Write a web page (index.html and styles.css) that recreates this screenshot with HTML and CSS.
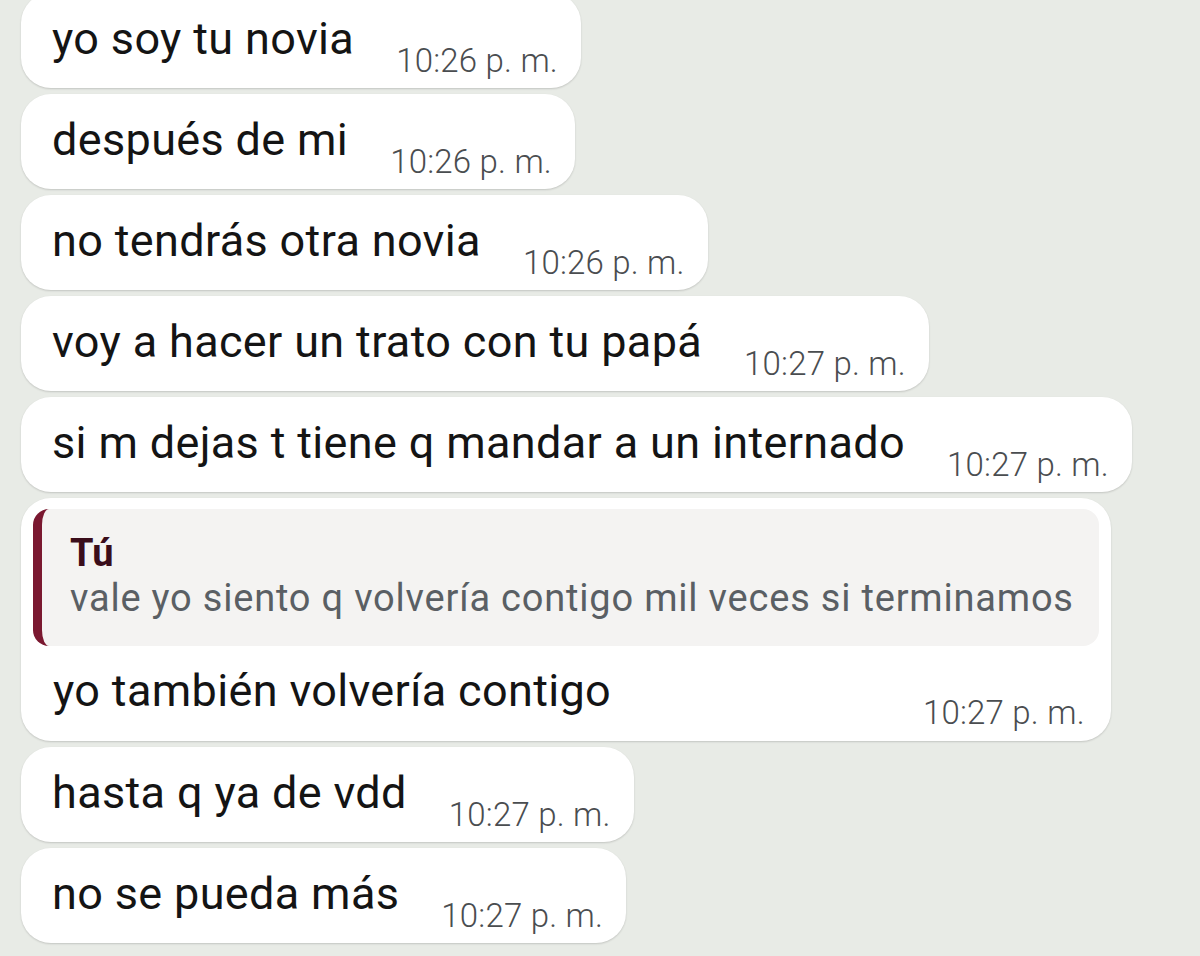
FILE: index.html
```html
<!DOCTYPE html>
<html lang="es">
<head>
<meta charset="utf-8">
<title>Chat</title>
<link rel="stylesheet" href="styles.css">
</head>
<body>
<main class="chat">
  <div class="bubble">
    <div class="row"><span class="text">yo soy tu novia</span><span class="time">10:26 p. m.</span></div>
  </div>
  <div class="bubble">
    <div class="row"><span class="text">después de mi</span><span class="time">10:26 p. m.</span></div>
  </div>
  <div class="bubble">
    <div class="row"><span class="text">no tendrás otra novia</span><span class="time">10:26 p. m.</span></div>
  </div>
  <div class="bubble">
    <div class="row"><span class="text">voy a hacer un trato con tu papá</span><span class="time">10:27 p. m.</span></div>
  </div>
  <div class="bubble">
    <div class="row"><span class="text">si m dejas t tiene q mandar a un internado</span><span class="time">10:27 p. m.</span></div>
  </div>
  <div class="bubble bubble-reply">
    <div class="quote">
      <div class="quote-author">Tú</div>
      <div class="quote-text">vale yo siento q volvería contigo mil veces si terminamos</div>
    </div>
    <div class="row row-reply"><span class="text">yo también volvería contigo</span><span class="time">10:27 p. m.</span></div>
  </div>
  <div class="bubble">
    <div class="row"><span class="text">hasta q ya de vdd</span><span class="time">10:27 p. m.</span></div>
  </div>
  <div class="bubble">
    <div class="row"><span class="text">no se pueda más</span><span class="time">10:27 p. m.</span></div>
  </div>
</main>
</body>
</html>
```
FILE: styles.css
```css
html, body {
  margin: 0;
  padding: 0;
}

body {
  background: #e8ebe6;
  font-family: Roboto, "Noto Sans", "Liberation Sans", sans-serif;
  color: #141414;
  width: 1200px;
  height: 956px;
  overflow: hidden;
}

/* message list, scrolled so the first bubble is slightly cut off */
.chat {
  display: flex;
  flex-direction: column;
  align-items: flex-start;
  gap: 6px;
  padding-left: 21px;
  margin-top: -7px;
}

.bubble {
  background: #ffffff;
  border-radius: 30px;
  box-shadow: 0 1px 2px rgba(0, 0, 0, 0.16);
}

.row {
  display: flex;
  align-items: flex-end;
  gap: 42px;
  padding: 20px 23px 11px 31px;
}

.text {
  font-size: 45px;
  line-height: 52px;
  letter-spacing: 0.35px;
  padding-bottom: 12px;
  white-space: nowrap;
}

.time {
  font-size: 33px;
  line-height: 32px;
  font-weight: 300;
  letter-spacing: 0.2px;
  color: #4a4d50;
  white-space: nowrap;
}

/* reply bubble with quoted message */
.bubble-reply {
  padding: 11px 12px 0;
}

.quote {
  background: #f4f3f2;
  border-radius: 16px;
  border-left: 9px solid #7a1830;
  padding: 22px 25px 25px 28px;
}

.quote-author {
  font-size: 38px;
  line-height: 44px;
  font-weight: 700;
  color: #3a0d1b;
}

.quote-text {
  font-size: 38px;
  line-height: 46px;
  letter-spacing: 0.8px;
  color: #5a5f64;
  white-space: nowrap;
}

.row-reply {
  justify-content: space-between;
  padding: 19px 14px 12px 20px;
}
```
